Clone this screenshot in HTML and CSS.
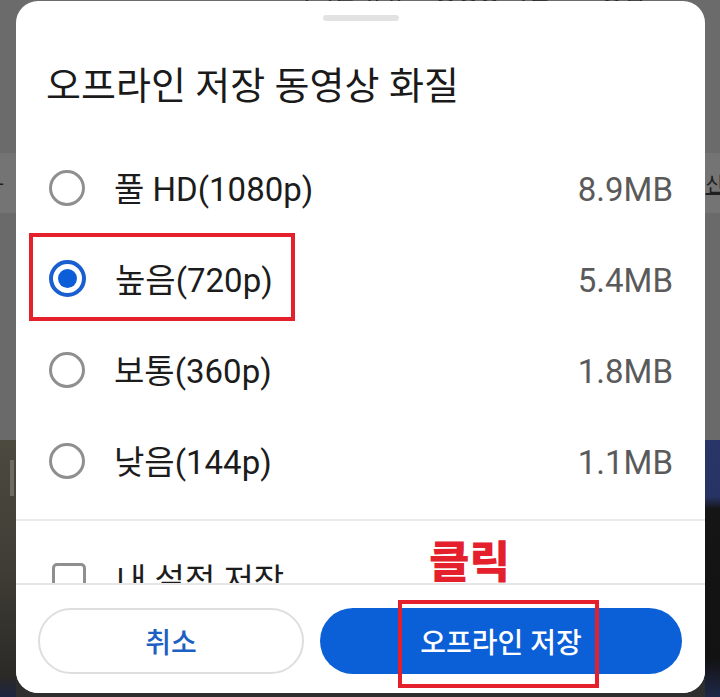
FILE: index.html
```html
<!DOCTYPE html>
<html lang="ko">
<head>
<meta charset="utf-8">
<title>오프라인 저장 동영상 화질</title>
<link rel="stylesheet" href="styles.css">
</head>
<body>
  <div class="backdrop">
    <div class="bg-top"><span class="bg-peek">아이폰 유튜브 동영상 다운로드 방법</span></div>
    <div class="bg-band"><span class="bg-band-left">- :</span><span class="bg-band-right">신</span></div>
    <div class="bg-mid"></div>
    <div class="bg-video">
      <div class="bg-video-left"><span class="bg-video-bar"></span></div>
      <div class="bg-video-mid"></div>
      <div class="bg-video-right"></div>
    </div>
  </div>

  <div class="sheet">
    <div class="handle"></div>
    <h1 class="title">오프라인 저장 동영상 화질</h1>
    <div class="sheet-body">
      <ul class="options">
        <li class="option">
          <span class="radio"></span>
          <span class="label">풀 HD(1080p)</span>
          <span class="size">8.9MB</span>
        </li>
        <li class="option">
          <span class="radio radio-on"><span class="radio-dot"></span></span>
          <span class="label">높음(720p)</span>
          <span class="size">5.4MB</span>
        </li>
        <li class="option">
          <span class="radio"></span>
          <span class="label">보통(360p)</span>
          <span class="size">1.8MB</span>
        </li>
        <li class="option">
          <span class="radio"></span>
          <span class="label">낮음(144p)</span>
          <span class="size">1.1MB</span>
        </li>
      </ul>
      <div class="divider"></div>
      <div class="check-row">
        <span class="checkbox"></span>
        <span class="label">내 설정 저장</span>
      </div>
    </div>
    <div class="sheet-footer">
      <button class="btn btn-cancel">취소</button>
      <button class="btn btn-primary">오프라인 저장</button>
    </div>
  </div>

  <div class="mark mark-option"></div>
  <div class="mark mark-button"></div>
  <div class="mark-text">클릭</div>
</body>
</html>
```

FILE: styles.css
```css
* { box-sizing: border-box; }

html, body {
  margin: 0;
  padding: 0;
}

body {
  width: 720px;
  height: 697px;
  overflow: hidden;
  position: relative;
  background: #6b6b6b;
  font-family: Roboto, "Noto Sans CJK KR", sans-serif;
}

/* ---------- dimmed page behind the sheet ---------- */
.backdrop {
  display: flex;
  flex-direction: column;
  width: 720px;
  height: 697px;
}

.bg-top {
  height: 153px;
  background: #6b6b6b;
  padding-left: 290px;
  overflow: hidden;
}

.bg-peek {
  display: block;
  margin-top: -22px;
  font-size: 24px;
  line-height: 28px;
  color: #2a2a2a;
  white-space: nowrap;
}

.bg-band {
  height: 60px;
  background: #747474;
  display: flex;
  justify-content: space-between;
  align-items: center;
  font-size: 20px;
  color: #1f1f1f;
}

.bg-band-left { margin-left: -2px; letter-spacing: 4px; }
.bg-band-right { margin-right: -4px; text-decoration: underline; }

.bg-mid {
  height: 227px;
  background: #6a6a6a;
}

.bg-video {
  flex: 1;
  display: flex;
}

.bg-video-left {
  width: 16px;
  background: linear-gradient(to bottom, #4c4a3f 0%, #3f3d35 50%, #2b2a27 92%, #1c2440 100%);
  padding-top: 20px;
  padding-left: 10px;
}

.bg-video-bar {
  display: block;
  width: 4px;
  height: 36px;
  background: #6e6c62;
}

.bg-video-mid {
  flex: 1;
  background: #2e2e2e;
}

.bg-video-right {
  width: 15px;
  background: linear-gradient(to bottom, #283566 0%, #273363 22%, #151515 27%, #121212 85%, #1f2848 100%);
}

/* ---------- bottom sheet ---------- */
.sheet {
  position: absolute;
  left: 16px;
  top: 1px;
  width: 689px;
  height: 692px;
  background: #ffffff;
  border-radius: 22px;
  display: flex;
  flex-direction: column;
  overflow: hidden;
}

.handle {
  width: 76px;
  height: 6px;
  border-radius: 3px;
  background: #e2e2e2;
  margin: 14px auto 0;
  flex: none;
}

.title {
  margin: 46px 0 0;
  padding-left: 30px;
  font-size: 38px;
  line-height: 38px;
  font-weight: 400;
  color: #1a1a1a;
  flex: none;
}

.sheet-body {
  flex: 1;
  overflow: hidden;
  padding-top: 37px;
}

.options {
  list-style: none;
  margin: 0;
  padding: 0;
}

.option {
  height: 91px;
  display: flex;
  align-items: center;
  padding: 0 32px 0 33px;
}

.radio {
  width: 36px;
  height: 36px;
  border: 3px solid #8f8f8f;
  border-radius: 50%;
  flex: none;
  display: flex;
  align-items: center;
  justify-content: center;
}

.radio-on {
  width: 37px;
  height: 37px;
  border: 4px solid #1a5fcf;
}

.radio-dot {
  width: 19px;
  height: 19px;
  border-radius: 50%;
  background: #0c5ed8;
}

.label {
  margin-left: 29px;
  font-size: 33px;
  line-height: 33px;
  color: #1c1c1c;
  white-space: nowrap;
  position: relative;
  top: 2px;
}

.size {
  margin-left: auto;
  font-size: 33px;
  line-height: 33px;
  color: #5a5a5a;
  position: relative;
  top: 2px;
}

.divider {
  margin-top: 13px;
  height: 2px;
  background: #ebebeb;
}

.check-row {
  margin-top: 42px;
  display: flex;
  align-items: flex-start;
  padding-left: 36px;
}

.checkbox {
  width: 34px;
  height: 34px;
  border: 3px solid #8f8f8f;
  border-radius: 5px;
  flex: none;
}

.check-row .label {
  margin-left: 30px;
  top: 1px;
}

.sheet-footer {
  flex: none;
  border-top: 2px solid #e6e6e6;
  padding: 23px 23px 19px 22px;
  display: flex;
  gap: 16px;
  background: #ffffff;
}

.btn {
  height: 66px;
  border-radius: 33px;
  font-family: Roboto, "Noto Sans CJK KR", sans-serif;
  font-size: 28px;
  font-weight: 500;
  display: flex;
  align-items: center;
  justify-content: center;
  padding: 0;
}

.btn-cancel {
  width: 266px;
  background: #ffffff;
  border: 2px solid #dedede;
  color: #1d5fc2;
}

.btn-primary {
  flex: 1;
  background: #0b5fd7;
  border: none;
  color: #ffffff;
}

/* ---------- red annotations over the screenshot ---------- */
.mark {
  position: absolute;
  border: 4px solid #e3202b;
}

.mark-option {
  left: 29px;
  top: 233px;
  width: 266px;
  height: 88px;
}

.mark-button {
  left: 398px;
  top: 600px;
  width: 201px;
  height: 88px;
}

.mark-text {
  position: absolute;
  left: 429px;
  top: 537px;
  font-family: "Noto Sans CJK KR", sans-serif;
  font-size: 44px;
  line-height: 44px;
  font-weight: 900;
  color: #e3202b;
}
```
